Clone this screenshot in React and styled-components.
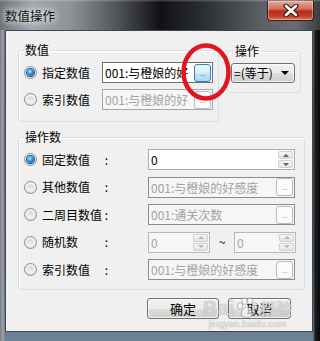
import React from 'react';
import styled, { createGlobalStyle } from 'styled-components';

const GlobalStyle = createGlobalStyle`
  html, body { margin: 0; padding: 0; background: #000; }
  body {
    font-family: "Noto Sans CJK SC", "Liberation Sans", sans-serif;
    font-size: 12px;
    color: #000;
  }
  * { box-sizing: border-box; }
`;

// Window chrome
const Window = styled.div`
  position: relative;
  width: 320px;
  height: 341px;
  display: flex;
  flex-direction: column;
  overflow: hidden;
  background: linear-gradient(180deg, #6b6f74 0%, #4f5358 45%, #55606c 80%, #6e8398 100%);
`;

const TitleBar = styled.div`
  height: 30px;
  flex-shrink: 0;
  display: flex;
  align-items: flex-start;
  background:
    linear-gradient(180deg, rgba(255,255,255,0.25) 0, rgba(255,255,255,0) 2px),
    linear-gradient(90deg, #6c7075 0%, #a3a7ab 10%, #8f9398 22%, #4a4d51 38%, #101113 50%, #2c2f33 64%, #5d6166 82%, #6a6e73 92%, #3b3e42 100%);
`;

const Title = styled.div`
  margin: 8px 0 0 5px;
  font-size: 12.5px;
  line-height: 15px;
  color: #111;
  text-shadow: 0 0 6px #fff, 0 0 10px rgba(255,255,255,0.9);
`;

const CloseButton = styled.div`
  margin: 1px 6px 0 auto;
  width: 47px;
  height: 20px;
  border: 1px solid #3b1c17;
  border-top: none;
  border-radius: 0 0 4px 4px;
  background: linear-gradient(180deg, #e7a798 0%, #d7705f 40%, #b72c1c 55%, #c2402b 80%, #e0765a 100%);
  box-shadow: inset 0 0 0 1px rgba(255,255,255,0.35);
  display: flex;
  align-items: center;
  justify-content: center;
`;

const Frame = styled.div`
  flex: 1;
  display: flex;
  padding: 0 7px 9px 5px;
  background: linear-gradient(90deg, #7a7e83 0, #9fa3a7 3px, transparent 5px, transparent 313px, #1c1e20 315px, #0a0a0a 320px);
`;

const Client = styled.div`
  flex: 1;
  display: flex;
  flex-direction: column;
  background: #f0f0f0;
  border: 1px solid #3e4852;
  padding: 12px 0 0 12px;
`;

// Group boxes
const TopRow = styled.div`
  display: flex;
  align-items: flex-start;
  gap: 8px;
`;

const Group = styled.fieldset`
  margin: ${p => p.$mt || 0}px 0 0 0;
  width: ${p => p.$w}px;
  padding: ${p => p.$pad};
  border: 1px solid #d5dfe5;
  border-radius: 3px;
  box-shadow: inset 1px 1px 0 #fff;
  min-width: 0;
`;

const Legend = styled.legend`
  padding: 0 1px;
  margin-left: ${p => p.$ml || 0}px;
  font-size: 12px;
  line-height: 14px;
`;

const Rows = styled.div`
  display: flex;
  flex-direction: column;
  gap: ${p => p.$gap}px;
`;

const Row = styled.div`
  display: flex;
  align-items: center;
  height: 21px;
`;

const Radio = styled.span`
  width: 13px;
  height: 13px;
  flex-shrink: 0;
  margin-right: 5px;
  border-radius: 50%;
  border: 1px solid #8e8f8f;
  background: radial-gradient(circle at 50% 40%, #ffffff 0, #eeeeee 50%, #cfcfcf 100%);
  display: flex;
  align-items: center;
  justify-content: center;

  &::after {
    content: '';
    width: 7px;
    height: 7px;
    border-radius: 50%;
    background: ${p => p.$checked
      ? 'radial-gradient(circle at 40% 35%, #b4e8ff 0, #2d91dc 45%, #0a4c90 100%)'
      : 'linear-gradient(180deg, #d8d8d8, #f4f4f4)'};
    box-shadow: ${p => p.$checked ? '0 0 0 1px #1d4f82' : 'none'};
  }
`;

const Label = styled.span`
  width: ${p => p.$w}px;
  flex-shrink: 0;
  display: flex;
  justify-content: space-between;
  margin-right: ${p => p.$mr || 0}px;
  white-space: nowrap;
  line-height: 16px;
`;

// Inputs
const TextBox = styled.div`
  width: ${p => p.$w}px;
  height: 100%;
  flex-shrink: 0;
  display: flex;
  align-items: center;
  padding-left: 2px;
  border: 1px solid ${p => p.$border};
  background: ${p => p.$disabled ? '#f6f6f6' : '#fff'};
  color: ${p => p.$disabled ? '#a3a3a3' : '#000'};
  overflow: hidden;
`;

const BoxText = styled.span`
  flex: 1;
  min-width: 0;
  white-space: nowrap;
  line-height: 17px;
`;

const DotsButton = styled.div`
  width: 17px;
  height: 18px;
  margin-right: 1px;
  flex-shrink: 0;
  border-radius: 3px;
  border: 1px solid ${p => p.$hot ? '#3c7fb1' : '#b7bcc0'};
  background: ${p => p.$hot
    ? 'linear-gradient(180deg, #eaf6fd 0%, #d9f0fc 50%, #bee6fd 51%, #a7d9f5 100%)'
    : '#fbfbfb'};
  color: ${p => p.$hot ? '#6d8fa8' : '#e0a458'};
  font-family: "Liberation Sans", sans-serif;
  font-size: 9px;
  line-height: 16px;
  text-align: center;
  letter-spacing: -0.5px;
`;

const Spin = styled.div`
  width: 15px;
  height: 17px;
  margin-right: 1px;
  flex-shrink: 0;
  display: flex;
  flex-direction: column;
  gap: 1px;
`;

const SpinBtn = styled.div`
  flex: 1;
  border: 1px solid #cdd0d4;
  border-radius: 2px;
  background: linear-gradient(180deg, #f6f6f6, #e3e3e3);
  display: flex;
  align-items: center;
  justify-content: center;

  &::after {
    content: '';
    border-left: 3px solid transparent;
    border-right: 3px solid transparent;
    ${p => p.$down ? 'border-top' : 'border-bottom'}: 3px solid ${p => p.$disabled ? '#b9b9b9' : '#4d6185'};
  }
`;

const Tilde = styled.span`
  width: 24px;
  text-align: center;
  flex-shrink: 0;
  line-height: 16px;
`;

// Combo
const Combo = styled.div`
  width: 64px;
  height: 20px;
  display: flex;
  align-items: center;
  padding: 0 5px 0 2px;
  border: 1px solid #707070;
  border-radius: 3px;
  background: linear-gradient(180deg, #f2f2f2 0%, #ebebeb 50%, #dddddd 51%, #cfcfcf 100%);
  box-shadow: inset 0 0 0 1px rgba(255,255,255,0.7);
  white-space: nowrap;
`;

const ComboText = styled.span`
  flex: 1;
  line-height: 16px;
`;

const Caret = styled.span`
  border-left: 4px solid transparent;
  border-right: 4px solid transparent;
  border-top: 4px solid #000;
`;

// Footer
const Buttons = styled.div`
  display: flex;
  justify-content: flex-end;
  gap: 9px;
  margin-top: 8px;
  padding-right: 21px;
`;

const Button = styled.div`
  width: ${p => p.$w}px;
  height: 21px;
  border: 1px solid #707070;
  border-radius: 3px;
  background: linear-gradient(180deg, #f2f2f2 0%, #ebebeb 50%, #dddddd 51%, #cfcfcf 100%);
  box-shadow: inset 0 0 0 1px rgba(255,255,255,0.75);
  display: flex;
  align-items: center;
  justify-content: center;
  font-size: 13px;
  line-height: 17px;
`;

// Overlays
const Annotation = styled.svg`
  position: absolute;
  left: 180px;
  top: 42px;
`;

const Watermark = styled.div`
  position: absolute;
  left: 203px;
  top: 297px;
  display: flex;
  flex-direction: column;
  align-items: center;
  color: rgba(255, 255, 255, 0.6);
  text-shadow: 0 0 1px rgba(110, 110, 110, 0.7);
  pointer-events: none;
`;

const MarkTop = styled.div`
  display: flex;
  align-items: center;
  gap: 1px;
`;

const MarkBai = styled.span`
  font-family: "Liberation Sans", sans-serif;
  font-weight: bold;
  font-size: 20px;
  line-height: 22px;
`;

const MarkJy = styled.span`
  font-size: 16px;
  line-height: 22px;
  font-weight: bold;
`;

const MarkUrl = styled.span`
  font-family: "Liberation Sans", sans-serif;
  font-size: 9px;
  line-height: 10px;
  letter-spacing: 0.3px;
`;

const Spinner = ({ disabled }) => (
  <Spin>
    <SpinBtn $disabled={disabled} />
    <SpinBtn $down $disabled={disabled} />
  </Spin>
);

const operands = [
  { label: '固定数值', kind: 'spin', checked: true },
  { label: '其他数值', kind: 'ref', text: '001:与橙娘的好感度' },
  { label: '二周目数值', kind: 'ref', text: '001:通关次数' },
  { label: '随机数', kind: 'range' },
  { label: '索引数值', kind: 'ref', text: '001:与橙娘的好感度' },
];

const OperandField = ({ item }) => {
  if (item.kind === 'spin') {
    return (
      <TextBox $w={147} $border="#abadb3">
        <BoxText>0</BoxText>
        <Spinner />
      </TextBox>
    );
  }
  if (item.kind === 'range') {
    return (
      <>
        <TextBox $w={62} $border="#b9b9b9" $disabled>
          <BoxText>0</BoxText>
          <Spinner disabled />
        </TextBox>
        <Tilde>~</Tilde>
        <TextBox $w={62} $border="#b9b9b9" $disabled>
          <BoxText>0</BoxText>
          <Spinner disabled />
        </TextBox>
      </>
    );
  }
  return (
    <TextBox $w={147} $border="#8c8c8c" $disabled>
      <BoxText>{item.text}</BoxText>
      <DotsButton>...</DotsButton>
    </TextBox>
  );
};

export default function App() {
  return (
    <>
      <GlobalStyle />
      <Window>
        <TitleBar>
          <Title>数值操作</Title>
          <CloseButton>
            <svg width="16" height="13" viewBox="0 0 16 13">
              <path d="M3 2 L13 11 M13 2 L3 11" stroke="#3a1a14" strokeWidth="5" strokeLinecap="round" />
              <path d="M3 2 L13 11 M13 2 L3 11" stroke="#fff" strokeWidth="2.6" strokeLinecap="round" />
            </svg>
          </CloseButton>
        </TitleBar>

        <Frame>
          <Client>
            <TopRow>
              <Group $w={201} $pad="5px 5px 11px 5px">
                <Legend>数值</Legend>
                <Rows $gap={6}>
                  <Row>
                    <Radio $checked />
                    <Label $w={60}>指定数值</Label>
                    <TextBox $w={111} $border="#6f6f6f">
                      <BoxText>001:与橙娘的好</BoxText>
                      <DotsButton $hot>...</DotsButton>
                    </TextBox>
                  </Row>
                  <Row>
                    <Radio />
                    <Label $w={60}>索引数值</Label>
                    <TextBox $w={111} $border="#a5a5a5" $disabled>
                      <BoxText>001:与橙娘的好</BoxText>
                      <DotsButton>...</DotsButton>
                    </TextBox>
                  </Row>
                </Rows>
              </Group>

              <Group $w={74} $mt={1} $pad="5px 5px 9px 3px">
                <Legend $ml={3}>操作</Legend>
                <Combo>
                  <ComboText>=(等于)</ComboText>
                  <Caret />
                </Combo>
              </Group>
            </TopRow>

            <Group $w={287} $mt={8} $pad="5px 9px 9px 5px">
              <Legend>操作数</Legend>
              <Rows $gap={6.5}>
                {operands.map(item => (
                  <Row key={item.label}>
                    <Radio $checked={item.checked} />
                    <Label $w={66} $mr={40}>
                      <span>{item.label}</span>
                      <span>:</span>
                    </Label>
                    <OperandField item={item} />
                  </Row>
                ))}
              </Rows>
            </Group>

            <Buttons>
              <Button $w={72}>确定</Button>
              <Button $w={63}>取消</Button>
            </Buttons>
          </Client>
        </Frame>

        <Annotation width="52" height="60" viewBox="0 0 52 60">
          <ellipse cx="26" cy="30" rx="22.5" ry="26.5" fill="none" stroke="#e3161f" strokeWidth="4.5" />
        </Annotation>

        <Watermark>
          <MarkTop>
            <MarkBai>Bai</MarkBai>
            <svg width="24" height="22" viewBox="0 0 24 22">
              <g fill="rgba(255,255,255,0.6)" stroke="rgba(110,110,110,0.6)" strokeWidth="0.8">
                <ellipse cx="5" cy="9" rx="2.6" ry="3.4" />
                <ellipse cx="9.5" cy="4" rx="2.6" ry="3.4" />
                <ellipse cx="15" cy="4" rx="2.6" ry="3.4" />
                <ellipse cx="19.5" cy="9" rx="2.6" ry="3.4" />
                <path d="M12 10 C8 10 5 16 7 19 C9 21 15 21 17 19 C19 16 16 10 12 10 Z" />
              </g>
            </svg>
            <MarkJy>经验</MarkJy>
          </MarkTop>
          <MarkUrl>jingyan.baidu.com</MarkUrl>
        </Watermark>
      </Window>
    </>
  );
}
